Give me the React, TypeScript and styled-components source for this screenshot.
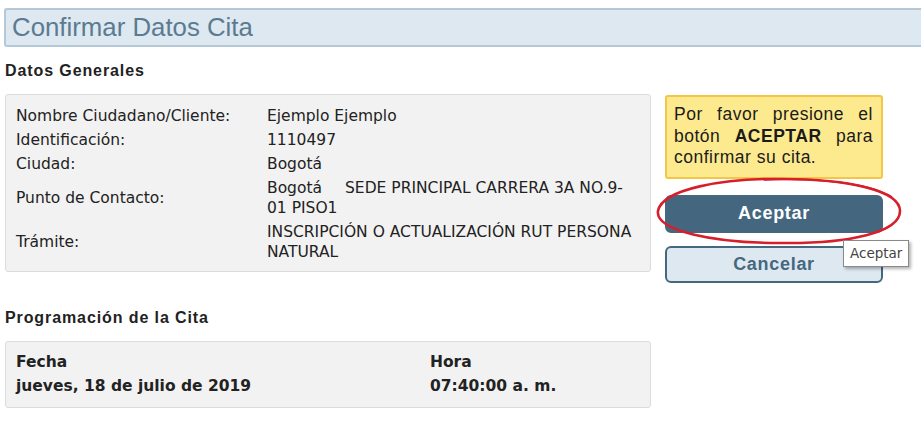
import * as React from "react"
import styled, {createGlobalStyle} from "styled-components"

const GlobalStyle = createGlobalStyle`
    body {
        margin: 0;
        background: #ffffff;
        font-family: "Liberation Sans", Arial, sans-serif;
        overflow: hidden;
    }
`

const generales = [
    {label: "Nombre Ciudadano/Cliente:", value: "Ejemplo Ejemplo"},
    {label: "Identificación:", value: "1110497"},
    {label: "Ciudad:", value: "Bogotá"},
    {label: "Punto de Contacto:", value: "SEDE PRINCIPAL CARRERA 3A NO.9-01 PISO1", city: "Bogotá"},
    {label: "Trámite:", value: "INSCRIPCIÓN O ACTUALIZACIÓN RUT PERSONA NATURAL"},
]

export default function App() {
    return (
        <Page>
            <GlobalStyle/>
            <TitleBar>Confirmar Datos Cita</TitleBar>
            <Content>
                <LeftColumn>
                    <SectionHeading>Datos Generales</SectionHeading>
                    <InfoBox>
                        {generales.map((row) => (
                            <InfoRow key={row.label}>
                                <InfoLabel>{row.label}</InfoLabel>
                                <InfoValue>
                                    {row.city && <City>{row.city}</City>}
                                    {row.value}
                                </InfoValue>
                            </InfoRow>
                        ))}
                    </InfoBox>
                    <SectionHeading $top={37}>Programación de la Cita</SectionHeading>
                    <ScheduleBox>
                        <ScheduleCell>Fecha</ScheduleCell>
                        <ScheduleCell>Hora</ScheduleCell>
                        <ScheduleCell>jueves, 18 de julio de 2019</ScheduleCell>
                        <ScheduleCell>07:40:00 a. m.</ScheduleCell>
                    </ScheduleBox>
                </LeftColumn>
                <RightColumn>
                    <Notice>
                        Por favor presione el botón <b>ACEPTAR</b> para confirmar su cita.
                    </Notice>
                    <ButtonWrap>
                        <ActionButton $primary>Aceptar</ActionButton>
                        <Highlight viewBox="0 0 250 68" aria-hidden="true">
                            <path
                                d="M128 2 C 70 1, 8 12, 4 34 C 1 54, 60 66, 126 66 C 196 67, 246 55, 246 34 C 246 14, 196 2, 128 2 Z"
                                fill="none" stroke="#d71f2b" strokeWidth="2.6"/>
                            <path d="M110 3 C 160 0, 215 6, 238 20"
                                  fill="none" stroke="#d71f2b" strokeWidth="1.6"/>
                        </Highlight>
                        <Tooltip>Aceptar</Tooltip>
                    </ButtonWrap>
                    <ActionButton>Cancelar</ActionButton>
                </RightColumn>
            </Content>
        </Page>
    )
}

const Page = styled.div`
    padding: 8px 0 0 4px;
    width: 940px;
`

const TitleBar = styled.div`
    height: 35px;
    line-height: 35px;
    border: 2px solid #b4c8d7;
    border-right: none;
    border-radius: 3px 0 0 3px;
    background: #dde8f0;
    padding-left: 6px;
    font-size: 25.8px;
    color: #5a7b91;
`

const Content = styled.div`
    display: flex;
    gap: 14px;
    padding-left: 1px;
`

const LeftColumn = styled.div`
    width: 646px;
    display: flex;
    flex-direction: column;
`

const RightColumn = styled.div`
    width: 218px;
    margin-top: 48px;
    display: flex;
    flex-direction: column;
`

const SectionHeading = styled.div<{ $top?: number }>`
    margin: ${(p) => p.$top ?? 15}px 0 14px;
    line-height: 18px;
    font-size: 16px;
    letter-spacing: 0.9px;
    font-weight: bold;
    color: #222;
`

const InfoBox = styled.div`
    background: #f2f2f2;
    border: 1px solid #dcdcdc;
    border-radius: 3px;
    padding: 9px 10px 7px 10px;
    font-family: "DejaVu Sans", Verdana, sans-serif;
    font-size: 15.5px;
    color: #222;
`

const InfoRow = styled.div`
    display: grid;
    grid-template-columns: 251px 1fr;
    align-items: center;
    padding: 2px 0;
    line-height: 20px;
`

const InfoLabel = styled.div``

const InfoValue = styled.div``

const City = styled.span`
    margin-right: 23px;
`

const ScheduleBox = styled.div`
    display: grid;
    grid-template-columns: 414px 1fr;
    background: #f2f2f2;
    border: 1px solid #dcdcdc;
    border-radius: 3px;
    padding: 8px 10px 9px;
    font-family: "DejaVu Sans", Verdana, sans-serif;
    font-size: 15.5px;
    font-weight: bold;
    line-height: 24px;
    color: #222;
`

const ScheduleCell = styled.div``

const Notice = styled.div`
    background: #fdea8e;
    border: 2px solid #f3c64a;
    border-radius: 3px;
    padding: 7px 8px 8px 7px;
    font-size: 17.5px;
    letter-spacing: 0.5px;
    line-height: 21.5px;
    text-align: justify;
    color: #1b1b1b;
`

const ButtonWrap = styled.div`
    position: relative;
    margin: 16px 0 13px;
`

const ActionButton = styled.button<{ $primary?: boolean }>`
    display: block;
    width: 100%;
    height: ${(p) => (p.$primary ? 38 : 37)}px;
    border-radius: 6px;
    border: 2px solid #46687f;
    background: ${(p) => (p.$primary ? "#44677f" : "#dde8f0")};
    color: ${(p) => (p.$primary ? "#ffffff" : "#46687f")};
    font-family: "Liberation Sans", Arial, sans-serif;
    font-size: 18px;
    letter-spacing: 0.7px;
    font-weight: bold;
    padding: 0;
`

const Highlight = styled.svg`
    position: absolute;
    left: -11px;
    top: -18px;
    width: 250px;
    height: 68px;
    pointer-events: none;
`

const Tooltip = styled.div`
    position: absolute;
    left: 178px;
    top: 45px;
    padding: 5px 6px 5px 6px;
    background: #ffffff;
    border: 1px solid #8a8a8a;
    box-shadow: 2px 2px 3px rgba(0, 0, 0, 0.3);
    font-family: "DejaVu Sans", Verdana, sans-serif;
    font-size: 13.5px;
    line-height: 15px;
    color: #444;
`
